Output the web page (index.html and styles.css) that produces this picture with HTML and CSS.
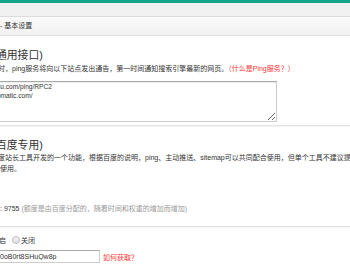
FILE: index.html
```html
<!DOCTYPE html>
<html lang="zh-CN">
<head>
  <meta charset="UTF-8">
  <meta name="viewport" content="width=device-width, initial-scale=1.0">
  <title>Ping 设置</title>
  <link rel="stylesheet" href="styles.css">
</head>
<body>
  <div class="topbar"></div>
  <div class="band"></div>

  <div class="box">
    <div class="box-head">- 基本设置</div>

    <div class="box-body">
      <h3 class="title">通用接口)</h3>
      <p class="desc">时，ping服务将向以下站点发出通告，第一时间通知搜索引擎最新的网页。<a class="red" href="#">（什么是Ping服务？）</a></p>
      <textarea class="ping-list">http://ping.baidu.com/ping/RPC2
http://rpc.pingomatic.com/</textarea>

      <hr class="sep">

      <h3 class="title">百度专用)</h3>
      <p class="desc wide">度站长工具开发的一个功能，根据百度的说明，ping、主动推送、sitemap可以共同配合使用，但单个工具不建议提交相同网址<br>使用。</p>
      <p class="quota">: 9755 <span class="muted">(额度是由百度分配的，随着时间和权重的增加而增加)</span></p>

      <hr class="sep sep-low">

      <div class="radios">
        <span>启</span>
        <input type="radio" name="baidu" class="radio">
        <span>关闭</span>
      </div>

      <div class="token-row">
        <input type="text" class="token" value="0oB0rt8SHuQw8p">
        <a class="red" href="#">如何获取？</a>
      </div>
    </div>
  </div>
</body>
</html>
```

FILE: styles.css
```css
body {
  margin: 0;
  font-family: "Liberation Sans", "Noto Sans CJK SC", sans-serif;
  font-size: 7px;
  color: #333;
  background-color: #fff;
  overflow: hidden;
}

.topbar {
  height: 3px;
  background-color: #17a589;
}

.band {
  height: 13px;
  background-color: #f1f1f1;
}

/* Settings box */
.box-head {
  height: 18px;
  line-height: 18px;
  border-top: 1px solid #dcdcdc;
  border-bottom: 1px solid #dcdcdc;
  background: linear-gradient(#fbfbfb, #f1f1f1);
  color: #333;
}

.box-body {
  background-color: #fff;
}

.title {
  margin: 12px 0 0;
  font-size: 10.8px;
  font-weight: normal;
  line-height: 14px;
  text-indent: -4px;
  color: #333;
  white-space: nowrap;
}

.box-body .sep + .title {
  margin-top: 11px;
}

.desc {
  margin: 2px 0 0;
  line-height: 10px;
  text-indent: -2px;
  white-space: nowrap;
}

.desc.wide {
  margin-top: 1px;
  line-height: 10.5px;
}

.red {
  color: #f33;
  text-decoration: none;
}

.ping-list {
  display: block;
  box-sizing: border-box;
  width: 323px;
  height: 41px;
  margin: 7px 0 0 -46px;
  padding: 0 2px;
  border: 1px solid #ccc;
  border-top-color: #aaa;
  box-shadow: inset 0 1px 1px rgba(0, 0, 0, 0.08);
  font-family: "Liberation Sans", sans-serif;
  font-size: 6.6px;
  line-height: 9px;
  color: #333;
  resize: both;
  overflow: hidden;
}

.sep {
  height: 0;
  margin: 3px 0 0;
  border: 0;
  border-top: 1px solid #e2e2e2;
  border-bottom: 1px solid #f4f4f4;
}

.sep-low {
  margin-top: 12px;
}

.quota {
  margin: 30px 0 0;
  line-height: 10px;
  white-space: nowrap;
}

.muted {
  color: #999;
}

.radios {
  display: flex;
  align-items: center;
  height: 10px;
  margin: 7px 0 0 -1px;
}

.radio {
  appearance: none;
  box-sizing: border-box;
  width: 8px;
  height: 8px;
  margin: 0 1px 0 6px;
  border: 1px solid #bbb;
  border-radius: 50%;
  background: linear-gradient(#f4f4f4, #dedede);
}

.token-row {
  display: flex;
  align-items: center;
  margin-top: 5px;
}

.token {
  box-sizing: border-box;
  width: 103px;
  height: 13px;
  margin: 0 3px 0 -3px;
  padding: 0 0 0 2px;
  border: 1px solid #ccc;
  border-top-color: #aaa;
  font-family: "Liberation Sans", sans-serif;
  font-size: 7px;
  color: #333;
}
```
